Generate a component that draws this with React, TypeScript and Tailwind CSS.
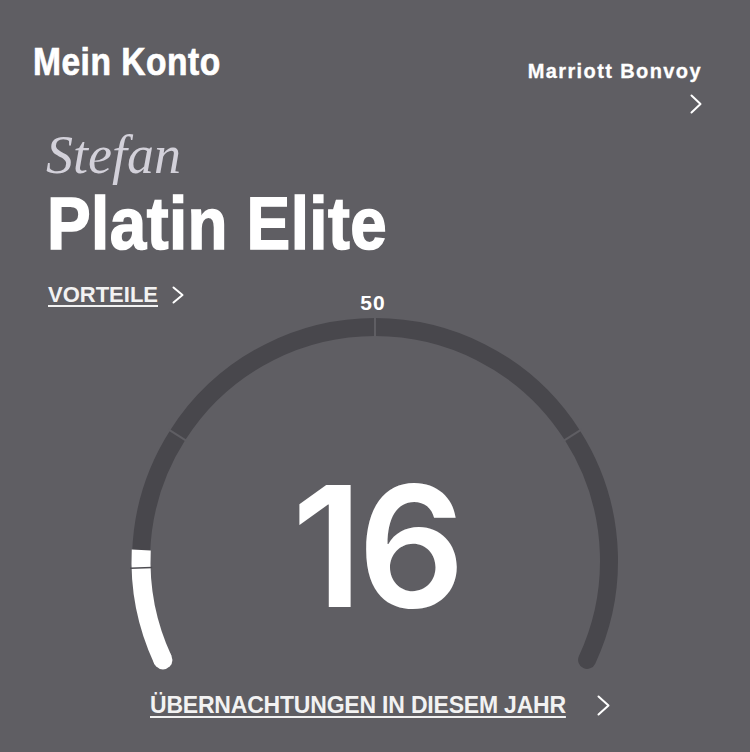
import React from "react";

const CX = 375;
const CY = 281;
const R = 234;

function pt(deg: number, r: number = R): [number, number] {
  const a = (deg * Math.PI) / 180;
  return [CX + r * Math.sin(a), CY - r * Math.cos(a)];
}

function arc(from: number, to: number): string {
  const [x1, y1] = pt(from);
  const [x2, y2] = pt(to);
  const large = to - from > 180 ? 1 : 0;
  return `M ${x1.toFixed(2)} ${y1.toFixed(2)} A ${R} ${R} 0 ${large} 1 ${x2.toFixed(2)} ${y2.toFixed(2)}`;
}

function Tick({ deg, color, w }: { deg: number; color: string; w: number }) {
  const [x1, y1] = pt(deg, R - 11);
  const [x2, y2] = pt(deg, R + 11);
  return <line x1={x1} y1={y1} x2={x2} y2={y2} stroke={color} strokeWidth={w} />;
}

function Chevron({ w, h, sw = 2 }: { w: number; h: number; sw?: number }) {
  return (
    <svg width={w} height={h} viewBox={`0 0 ${w} ${h}`} fill="none">
      <polyline
        points={`${sw / 2 + 0.5},${sw / 2 + 0.5} ${w - sw / 2 - 0.5},${h / 2} ${sw / 2 + 0.5},${h - sw / 2 - 0.5}`}
        stroke="#ffffff"
        strokeWidth={sw}
        strokeLinecap="round"
        strokeLinejoin="round"
      />
    </svg>
  );
}

export default function App() {
  const [sx, sy] = pt(-115);
  return (
    <div className="w-[750px] h-[752px] bg-[#5f5e63] overflow-hidden text-white font-['Liberation_Sans',Arial,sans-serif]">
      {/* header */}
      <div className="flex justify-between items-start">
        <h1 className="pl-[33px] pt-[42px] text-[39px] leading-none font-bold whitespace-nowrap">
          <span className="inline-block origin-left scale-x-[0.86] tracking-[0.6px] [-webkit-text-stroke:0.7px_#ffffff]">Mein Konto</span>
        </h1>
        <div className="pt-[61px] pr-[48px] flex flex-col items-end">
          <span className="text-[20px] leading-none font-bold tracking-[0.07em] whitespace-nowrap [-webkit-text-stroke:0.3px_#ffffff]">
            Marriott Bonvoy
          </span>
          <div className="mt-[13px]">
            <Chevron w={12} h={20} />
          </div>
        </div>
      </div>

      {/* name */}
      <div className="mt-[14px]">
        <div className="pl-[46px] text-[54px] leading-none italic text-[#d3d1da] font-['Liberation_Serif','Times_New_Roman',serif]">
          Stefan
        </div>
        <div className="pl-[47px] mt-[5px] text-[74px] leading-none font-bold whitespace-nowrap">
          <span className="inline-block origin-left scale-x-[0.885] tracking-[0.5px] [-webkit-text-stroke:1.6px_#ffffff]">Platin Elite</span>
        </div>
        <div className="pl-[48px] mt-[23px] flex items-center gap-[14px]">
          <span className="text-[22px] leading-none font-bold underline decoration-2 underline-offset-[3px] text-[#f2f2f2]">
            VORTEILE
          </span>
          <Chevron w={12} h={18} />
        </div>
      </div>

      {/* gauge */}
      <div className="relative mt-[-26px] h-[400px] w-[750px]">
        <svg width={750} height={400} viewBox="0 0 750 400" className="block">
          <path d={arc(-115, 115)} stroke="#48474c" strokeWidth={18} fill="none" strokeLinecap="round" />
          <Tick deg={-57.5} color="#5f5e63" w={2} />
          <Tick deg={0} color="#5f5e63" w={2} />
          <Tick deg={57.5} color="#5f5e63" w={2} />
          <path d={arc(-115, -87.3)} stroke="#ffffff" strokeWidth={19} fill="none" strokeLinecap="butt" />
          <circle cx={sx} cy={sy} r={9.5} fill="#ffffff" />
          <Tick deg={-91.7} color="#4e4d52" w={1.5} />
        </svg>
        <div className="absolute top-[12px] left-0 w-[746px] text-center text-[21px] leading-none font-bold tracking-[0.05em]">
          50
        </div>
        <div className="absolute top-[182px] left-0 w-[752px] text-center text-[168px] leading-none font-semibold tracking-[-0.03em] font-['Inter',sans-serif]">
          16
        </div>
      </div>

      {/* bottom */}
      <div className="mt-[14px] pl-[150px] flex items-center gap-[31px]">
        <span className="text-[23px] leading-none font-bold tracking-[-0.2px] underline decoration-2 underline-offset-[3px] whitespace-nowrap text-[#f2f2f2]">
          ÜBERNACHTUNGEN IN DIESEM JAHR
        </span>
        <Chevron w={13} h={21} />
      </div>
    </div>
  );
}
